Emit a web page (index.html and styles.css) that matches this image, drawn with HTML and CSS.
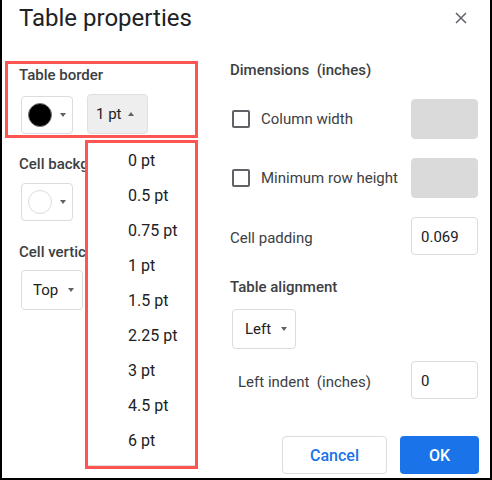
FILE: index.html
```html
<!DOCTYPE html>
<html>
<head>
<meta charset="utf-8">
<link rel="stylesheet" href="styles.css">
</head>
<body>
<div class="dialog">
  <header class="head">
    <h1 class="title">Table properties</h1>
    <span class="close"><svg width="12" height="12" viewBox="0 0 12 12"><path d="M1 1L11 11M11 1L1 11" stroke="#5f6368" stroke-width="1.5" fill="none"/></svg></span>
  </header>
  <div class="body">
    <div class="left">
      <section class="group hl">
        <div class="label">Table border</div>
        <div class="ctrls">
          <div class="color-btn"><span class="swatch black"></span><span class="caret"></span></div>
          <div class="select active">1 pt<span class="caret up"></span></div>
        </div>
      </section>
      <section class="group g2">
        <div class="label">Cell background color</div>
        <div class="ctrls">
          <div class="color-btn"><span class="swatch white"></span><span class="caret"></span></div>
        </div>
      </section>
      <section class="group g3">
        <div class="label">Cell vertical alignment</div>
        <div class="ctrls">
          <div class="select plain">Top<span class="caret"></span></div>
        </div>
      </section>
    </div>
    <div class="right">
      <div class="rlabel">Dimensions&nbsp; (inches)</div>
      <div class="row r1"><span class="check"></span><span class="rtext">Column width</span><span class="input disabled"></span></div>
      <div class="row r2"><span class="check"></span><span class="rtext">Minimum row height</span><span class="input disabled"></span></div>
      <div class="row r3"><span class="rtext">Cell padding</span><span class="input">0.069</span></div>
      <div class="rlabel r4">Table alignment</div>
      <div class="select plain align">Left<span class="caret"></span></div>
      <div class="row r5"><span class="rtext indent">Left indent&nbsp; (inches)</span><span class="input">0</span></div>
    </div>
  </div>
  <footer class="foot">
    <span class="btn cancel">Cancel</span>
    <span class="btn ok">OK</span>
  </footer>
  <ul class="menu">
    <li>0 pt</li>
    <li>0.5 pt</li>
    <li>0.75 pt</li>
    <li>1 pt</li>
    <li>1.5 pt</li>
    <li>2.25 pt</li>
    <li>3 pt</li>
    <li>4.5 pt</li>
    <li>6 pt</li>
  </ul>
</div>
</body>
</html>
```
FILE: styles.css
```css
* { box-sizing: border-box; }
html, body { margin: 0; padding: 0; background: #fff; }
body { font-family: Roboto, "Liberation Sans", sans-serif; color: #3c4043; }

.dialog {
  position: relative;
  width: 492px;
  height: 480px;
  border: 2px solid #000;
  border-top: 0;
  display: flex;
  flex-direction: column;
  background: #fff;
}

.head {
  display: flex;
  justify-content: space-between;
  align-items: flex-start;
  padding: 4px 23px 0 17px;
}
.title {
  margin: 0;
  font-size: 24px;
  line-height: 28px;
  font-weight: 400;
  color: #202124;
}
.close { display: block; margin-top: 8px; width: 12px; height: 12px; }
.close svg { display: block; }

.body {
  display: flex;
  margin-top: 28px;
}
.left {
  width: 193px;
  margin-left: 3px;
  display: flex;
  flex-direction: column;
}
.group { padding-left: 14px; }
.hl {
  margin-top: 1px;
  border: 3px solid #fd5552;
  padding: 1px 11px 1px 11px;
}
.label {
  font-size: 15px;
  line-height: 20px;
  font-weight: 500;
  white-space: nowrap;
  color: #3c4043;
}
.ctrls {
  display: flex;
  align-items: flex-end;
  gap: 14px;
  margin-left: 2px;
  margin-top: 9px;
}
.g2 { margin-top: 16px; }
.g3 { margin-top: 21px; }
.g3 .ctrls { margin-top: 8px; }

.color-btn {
  width: 52px;
  height: 38px;
  border: 1px solid #dadce0;
  border-radius: 4px;
  display: flex;
  align-items: center;
  padding-left: 6px;
  gap: 8px;
}
.swatch {
  width: 24px;
  height: 24px;
  border-radius: 50%;
}
.swatch.black { background: #000; border: 1px solid #777; }
.swatch.white { background: #fff; border: 1px solid #dadce0; }

.caret {
  display: inline-block;
  width: 0;
  height: 0;
  border-left: 3.5px solid transparent;
  border-right: 3.5px solid transparent;
  border-top: 4px solid #5f6368;
}
.caret.up {
  border-top: 0;
  border-bottom: 4px solid #5f6368;
}

.select {
  height: 40px;
  border: 1px solid #dadce0;
  border-radius: 4px;
  display: flex;
  align-items: center;
  font-size: 15px;
  color: #202124;
  white-space: nowrap;
}
.select.active {
  width: 61px;
  background: #eeeeee;
  border-color: #e0e0e0;
  padding-left: 8px;
  gap: 7px;
}
.select.plain {
  padding-left: 11px;
  gap: 10px;
  width: 62px;
}
.select.align {
  width: 64px;
  padding-left: 12px;
  margin-top: 12px;
  margin-left: 2px;
}

.right {
  width: 248px;
  margin-left: 32px;
  display: flex;
  flex-direction: column;
  align-items: flex-start;
}
.rlabel {
  font-size: 15px;
  line-height: 20px;
  font-weight: 500;
  color: #3c4043;
}
.row {
  display: flex;
  align-items: center;
  height: 40px;
  width: 100%;
  font-size: 15px;
  color: #3c4043;
}
.r1 { margin-top: 19px; }
.r2 { margin-top: 19px; }
.r3 { margin-top: 18px; }
.r4 { margin-top: 21px; }
.r5 { margin-top: 11px; }
.check {
  width: 18px;
  height: 18px;
  border: 2px solid #5f6368;
  border-radius: 2px;
  margin-left: 2px;
  margin-right: 11px;
}
.rtext { line-height: 20px; white-space: nowrap; }
.r3 .rtext, .r5 .rtext { padding-top: 4px; }
.indent { margin-left: 8px; }
.input {
  margin-left: auto;
  width: 67px;
  height: 38px;
  border: 1px solid #dadce0;
  border-radius: 4px;
  font-size: 15px;
  color: #202124;
  padding: 2px 9px 0;
  display: flex;
  align-items: center;
}
.input.disabled { background: #dadada; border-color: #dadada; height: 40px; }

.foot {
  margin-top: auto;
  display: flex;
  justify-content: flex-end;
  gap: 13px;
  padding: 0 11px 4px 0;
}
.btn {
  height: 38px;
  border-radius: 4px;
  display: flex;
  align-items: center;
  justify-content: center;
  font-size: 16px;
  font-weight: 500;
}
.cancel { width: 105px; border: 1px solid #dadce0; color: #1a73e8; }
.ok { width: 79px; background: #1a73e8; color: #fff; }

.menu {
  position: absolute;
  left: 83px;
  top: 140px;
  width: 113px;
  height: 329px;
  margin: 0;
  padding: 0 0 0 40px;
  list-style: none;
  background: #fff;
  border: 3px solid #fd5552;
  box-shadow: inset 0 -1px 0 #e0e0e0;
}
.menu li {
  font-size: 16px;
  line-height: 35px;
  color: #202124;
  white-space: nowrap;
}
```
